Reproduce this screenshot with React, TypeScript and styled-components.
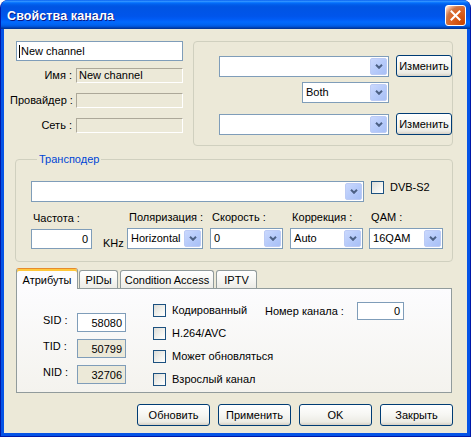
import React from "react";
import styled, { createGlobalStyle } from "styled-components";

const GlobalStyle = createGlobalStyle`
  html, body {
    margin: 0;
    padding: 0;
    background: #ffffff;
  }
  body {
    font-family: "Liberation Sans", Arial, sans-serif;
    font-size: 11px;
    color: #000;
  }
`;

const Window = styled.div`
  width: 471px;
  height: 437px;
  box-sizing: border-box;
  display: flex;
  flex-direction: column;
  background: #0553e6;
  border: 1px solid #0019a8;
  border-top: none;
  border-radius: 8px 8px 0 0;
  overflow: hidden;
`;

const TitleBar = styled.div`
  height: 29px;
  flex: 0 0 29px;
  margin: 0 -1px;
  display: flex;
  align-items: center;
  justify-content: space-between;
  padding: 2px 5px 0 7px;
  box-sizing: border-box;
  background: linear-gradient(
    to bottom,
    #0058ee 0%,
    #3593ff 4%,
    #288eff 6%,
    #127dff 8%,
    #036ffc 10%,
    #0262ee 14%,
    #0057e5 20%,
    #0054e3 24%,
    #0055eb 56%,
    #005bf5 66%,
    #026afe 76%,
    #0062ef 86%,
    #0052d6 92%,
    #0040ab 96%,
    #003092 100%
  );
`;

const Title = styled.span`
  color: #fff;
  font-weight: bold;
  font-size: 12.5px;
  text-shadow: 1px 1px #0a1883;
  letter-spacing: 0.1px;
`;

const CloseButton = styled.div`
  width: 21px;
  height: 21px;
  box-sizing: border-box;
  margin-top: -1px;
  border: 1px solid #fff;
  border-radius: 3px;
  display: flex;
  align-items: center;
  justify-content: center;
  background: radial-gradient(
    circle at 90% 90%,
    #cc4600 0%,
    #dc6527 55%,
    #cd7546 70%,
    #ffccb2 90%,
    #ffffff 100%
  );
`;

const Body = styled.div`
  flex: 1;
  margin: 0 3px 3px 3px;
  background: #ece9d8;
  display: flex;
  flex-direction: column;
`;

/* ---------- top part ---------- */

const TopSection = styled.div`
  display: flex;
  align-items: flex-start;
  gap: 10px;
  padding: 12px 0 0 6px;
`;

const NameColumn = styled.div`
  display: flex;
  flex-direction: column;
`;

const InfoGrid = styled.div`
  display: grid;
  grid-template-columns: 62px 107px;
  column-gap: 4px;
  row-gap: 10px;
`;

const InfoLabel = styled.span`
  text-align: right;
  line-height: 15px;
  white-space: nowrap;
`;

const SunkenField = styled.div`
  height: 15px;
  box-sizing: border-box;
  border-top: 1px solid #aca899;
  border-left: 1px solid #aca899;
  border-right: 1px solid #ffffff;
  border-bottom: 1px solid #ffffff;
  padding-left: 2px;
  line-height: 13px;
  white-space: nowrap;
`;

const EditBox = styled.div<{ $w: number; $h?: number; $align?: "left" | "right"; $disabled?: boolean }>`
  width: ${(p) => p.$w}px;
  height: ${(p) => p.$h ?? 20}px;
  box-sizing: border-box;
  border: 1px solid #7f9db9;
  background: ${(p) => (p.$disabled ? "#ece9d8" : "#ffffff")};
  display: flex;
  align-items: center;
  justify-content: ${(p) => (p.$align === "right" ? "flex-end" : "flex-start")};
  padding: ${(p) => (p.$align === "right" ? "0 3px 0 0" : "0 0 0 2px")};
  white-space: nowrap;
`;

const NameEdit = styled(EditBox)`
  margin: 0 0 7px 6px;
`;

const Caret = styled.span`
  width: 1px;
  height: 13px;
  background: #000;
  margin-right: 1px;
`;

const SourceGroup = styled.div`
  width: 260px;
  height: 105px;
  box-sizing: border-box;
  border: 1px solid #d0d0bf;
  border-radius: 4px;
  padding: 13px 0 0 25px;
  display: flex;
  flex-direction: column;
`;

const SourceRow = styled.div`
  display: flex;
  align-items: center;
  gap: 7px;
  height: 22px;
`;

const BothRow = styled.div`
  display: flex;
  justify-content: flex-end;
  width: 170px;
  margin: 5px 0 10px;
`;

/* ---------- combo box ---------- */

const ComboBox = styled.div<{ $w: number }>`
  width: ${(p) => p.$w}px;
  height: 21px;
  box-sizing: border-box;
  border: 1px solid #7f9db9;
  background: #fff;
  padding: 1px;
  display: flex;
  align-items: stretch;
`;

const ComboValue = styled.span`
  flex: 1;
  padding-left: 2px;
  line-height: 17px;
  white-space: nowrap;
  overflow: hidden;
`;

const ComboArrow = styled.span`
  width: 17px;
  box-sizing: border-box;
  border: 1px solid #bccbf5;
  border-radius: 2px;
  background: linear-gradient(135deg, #cad8fd 0%, #b7cbfa 50%, #a8c0f6 100%);
  display: flex;
  align-items: center;
  justify-content: center;
`;

function Combo({ w, value }: { w: number; value?: string }) {
  return (
    <ComboBox $w={w}>
      <ComboValue>{value}</ComboValue>
      <ComboArrow>
        <svg width="8" height="5" viewBox="0 0 8 5">
          <polyline points="1,0.8 4,3.8 7,0.8" fill="none" stroke="#4d6185" strokeWidth="2" />
        </svg>
      </ComboArrow>
    </ComboBox>
  );
}

/* ---------- buttons ---------- */

const XpButton = styled.button<{ $w: number }>`
  width: ${(p) => p.$w}px;
  height: 22px;
  flex: 0 0 auto;
  box-sizing: border-box;
  padding: 0;
  border: 1px solid #003c74;
  border-radius: 3px;
  background: linear-gradient(180deg, #ffffff 0%, #f6f6f2 50%, #ecebe4 85%, #d6d0c5 100%);
  font-family: "Liberation Sans", Arial, sans-serif;
  font-size: 11px;
  color: #000;
`;

/* ---------- transponder ---------- */

const Fieldset = styled.fieldset`
  margin: 6px 14px 0 11px;
  padding: 15px 14px 12px 15px;
  border: 1px solid #d0d0bf;
  border-radius: 4px;
  min-width: 0;
`;

const Legend = styled.legend`
  color: #0046d5;
  line-height: 14px;
  padding: 0 2px;
  margin-left: 6px;
`;

const Row = styled.div`
  display: flex;
  align-items: flex-start;
`;

const ParamRow = styled.div`
  display: flex;
  align-items: flex-end;
  margin-top: 9px;
`;

const ParamColumn = styled.div<{ $gap?: number }>`
  display: flex;
  flex-direction: column;
  margin-left: ${(p) => p.$gap ?? 0}px;
`;

const ParamLabel = styled.span`
  line-height: 13px;
  margin-bottom: 4px;
  padding-left: 2px;
  white-space: nowrap;
`;

const Unit = styled.span`
  line-height: 13px;
  margin: 0 0 -1px 11px;
  width: 20px;
`;

const CheckLabel = styled.label<{ $gap?: number }>`
  display: flex;
  align-items: center;
  gap: 6px;
  margin-left: ${(p) => p.$gap ?? 0}px;
  line-height: 13px;
  white-space: nowrap;
`;

const CheckBox = styled.span`
  width: 13px;
  height: 13px;
  flex: 0 0 13px;
  box-sizing: border-box;
  border: 1px solid #1c5180;
  background: linear-gradient(135deg, #dcdcd7 0%, #f3f3ef 60%, #ffffff 100%);
`;

/* ---------- tabs ---------- */

const TabStrip = styled.div`
  display: flex;
  align-items: flex-end;
  height: 20px;
  margin: 6px 15px 0 12px;
`;

const Tab = styled.div<{ $w: number; $gap?: number; $active?: boolean }>`
  position: relative;
  z-index: ${(p) => (p.$active ? 1 : 0)};
  width: ${(p) => p.$w}px;
  height: ${(p) => (p.$active ? 21 : 18)}px;
  margin-left: ${(p) => p.$gap ?? 0}px;
  margin-bottom: ${(p) => (p.$active ? -1 : 0)}px;
  box-sizing: border-box;
  border: 1px solid #919b9c;
  border-bottom: none;
  border-top-color: ${(p) => (p.$active ? "#e68b2c" : "#919b9c")};
  border-radius: 3px 3px 0 0;
  box-shadow: ${(p) => (p.$active ? "inset 0 2px #ffc83c" : "none")};
  background: ${(p) => (p.$active ? "#fcfcfe" : "linear-gradient(180deg, #ffffff 0%, #f7f7f4 50%, #ecebe6 100%)")};
  display: flex;
  align-items: center;
  justify-content: center;
  padding-top: ${(p) => (p.$active ? 1 : 0)}px;
  white-space: nowrap;
`;

const TabPanel = styled.div`
  height: 105px;
  box-sizing: border-box;
  margin: 0 15px 0 12px;
  border: 1px solid #919b9c;
  background: linear-gradient(180deg, #fcfcfe 0%, #f4f3ee 100%);
  display: flex;
  align-items: flex-start;
`;

const IdGrid = styled.div`
  display: grid;
  grid-template-columns: 34px 49px;
  grid-auto-rows: 19px;
  row-gap: 7px;
  margin: 24px 0 0 26px;
`;

const IdLabel = styled.span`
  line-height: 13px;
  align-self: start;
  padding-top: 1px;
`;

const CheckColumn = styled.div`
  display: flex;
  flex-direction: column;
  margin: 10px 0 0 27px;
`;

const CheckRow = styled.div`
  display: flex;
  align-items: center;
  height: 23px;
`;

const CheckText = styled.span<{ $w?: number }>`
  width: ${(p) => (p.$w ? `${p.$w}px` : "auto")};
`;

const ChannelLabel = styled.span`
  width: 92px;
  white-space: nowrap;
`;

const Footer = styled.div`
  display: flex;
  justify-content: flex-end;
  gap: 8px;
  margin: 11px 14px 0 0;
`;

export default function App() {
  return (
    <>
      <GlobalStyle />
      <Window>
        <TitleBar>
          <Title>Свойства канала</Title>
          <CloseButton>
            <svg width="11" height="11" viewBox="0 0 11 11">
              <path d="M1.5 1.5 L9.5 9.5 M9.5 1.5 L1.5 9.5" stroke="#fff" strokeWidth="2" strokeLinecap="square" />
            </svg>
          </CloseButton>
        </TitleBar>

        <Body>
          <TopSection>
            <NameColumn>
              <NameEdit $w={167}>
                <Caret />
                New channel
              </NameEdit>
              <InfoGrid>
                <InfoLabel>Имя :</InfoLabel>
                <SunkenField>New channel</SunkenField>
                <InfoLabel>Провайдер :</InfoLabel>
                <SunkenField />
                <InfoLabel>Сеть :</InfoLabel>
                <SunkenField />
              </InfoGrid>
            </NameColumn>

            <SourceGroup>
              <SourceRow>
                <Combo w={170} />
                <XpButton $w={56}>Изменить</XpButton>
              </SourceRow>
              <BothRow>
                <Combo w={87} value="Both" />
              </BothRow>
              <SourceRow>
                <Combo w={170} />
                <XpButton $w={56}>Изменить</XpButton>
              </SourceRow>
            </SourceGroup>
          </TopSection>

          <Fieldset>
            <Legend>Трансподер</Legend>
            <Row>
              <Combo w={333} />
              <CheckLabel $gap={7}>
                <CheckBox />
                DVB-S2
              </CheckLabel>
            </Row>
            <ParamRow>
              <ParamColumn>
                <ParamLabel>Частота :</ParamLabel>
                <EditBox $w={61} $align="right">0</EditBox>
              </ParamColumn>
              <Unit>KHz</Unit>
              <ParamColumn $gap={4}>
                <ParamLabel>Поляризация :</ParamLabel>
                <Combo w={76} value="Horizontal" />
              </ParamColumn>
              <ParamColumn $gap={7}>
                <ParamLabel>Скорость :</ParamLabel>
                <Combo w={73} value="0" />
              </ParamColumn>
              <ParamColumn $gap={7}>
                <ParamLabel>Коррекция :</ParamLabel>
                <Combo w={73} value="Auto" />
              </ParamColumn>
              <ParamColumn $gap={6}>
                <ParamLabel>QAM :</ParamLabel>
                <Combo w={74} value="16QAM" />
              </ParamColumn>
            </ParamRow>
          </Fieldset>

          <TabStrip>
            <Tab $w={62} $active>
              Атрибуты
            </Tab>
            <Tab $w={39} $gap={1}>
              PIDы
            </Tab>
            <Tab $w={94} $gap={2}>
              Condition Access
            </Tab>
            <Tab $w={41} $gap={2}>
              IPTV
            </Tab>
          </TabStrip>
          <TabPanel>
            <IdGrid>
              <IdLabel>SID :</IdLabel>
              <EditBox $w={49} $h={19} $align="right">58080</EditBox>
              <IdLabel>TID :</IdLabel>
              <EditBox $w={49} $h={19} $align="right" $disabled>50799</EditBox>
              <IdLabel>NID :</IdLabel>
              <EditBox $w={49} $h={19} $align="right" $disabled>32706</EditBox>
            </IdGrid>

            <CheckColumn>
              <CheckRow>
                <CheckLabel>
                  <CheckBox />
                  <CheckText $w={93}>Кодированный</CheckText>
                </CheckLabel>
                <ChannelLabel>Номер канала :</ChannelLabel>
                <EditBox $w={47} $h={18} $align="right">0</EditBox>
              </CheckRow>
              <CheckRow>
                <CheckLabel>
                  <CheckBox />
                  <CheckText>H.264/AVC</CheckText>
                </CheckLabel>
              </CheckRow>
              <CheckRow>
                <CheckLabel>
                  <CheckBox />
                  <CheckText>Может обновляться</CheckText>
                </CheckLabel>
              </CheckRow>
              <CheckRow>
                <CheckLabel>
                  <CheckBox />
                  <CheckText>Взрослый канал</CheckText>
                </CheckLabel>
              </CheckRow>
            </CheckColumn>
          </TabPanel>

          <Footer>
            <XpButton $w={73}>Обновить</XpButton>
            <XpButton $w={73}>Применить</XpButton>
            <XpButton $w={73}>OK</XpButton>
            <XpButton $w={73}>Закрыть</XpButton>
          </Footer>
        </Body>
      </Window>
    </>
  );
}
